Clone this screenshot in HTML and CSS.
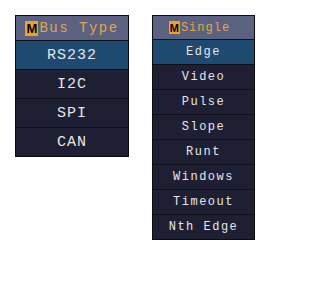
FILE: index.html
```html
<!DOCTYPE html>
<html>
<head>
<meta charset="utf-8">
<link rel="stylesheet" href="styles.css">
</head>
<body>
<div class="stage">
  <div class="menu menu-bus">
    <div class="menu-head"><span class="badge">M</span><span class="title">Bus Type</span></div>
    <div class="item selected">RS232</div>
    <div class="item">I2C</div>
    <div class="item">SPI</div>
    <div class="item">CAN</div>
  </div>
  <div class="menu menu-single">
    <div class="menu-head"><span class="badge">M</span><span class="title">Single</span></div>
    <div class="item selected">Edge</div>
    <div class="item">Video</div>
    <div class="item">Pulse</div>
    <div class="item">Slope</div>
    <div class="item">Runt</div>
    <div class="item">Windows</div>
    <div class="item">Timeout</div>
    <div class="item">Nth Edge</div>
  </div>
</div>
</body>
</html>
```
FILE: styles.css
```css
html, body {
  margin: 0;
  padding: 0;
  background: #ffffff;
}
.stage {
  display: flex;
  align-items: flex-start;
  gap: 23px;
  padding: 15px 0 0 15px;
  font-family: "Liberation Mono", "Courier New", monospace;
}
.menu {
  display: flex;
  flex-direction: column;
  background: #10101a;
  border: 1px solid #0c0c14;
  gap: 1px;
}
.menu-head {
  display: flex;
  align-items: center;
  justify-content: center;
  background: #5b6180;
  color: #e3a54a;
}
.badge {
  display: inline-flex;
  align-items: center;
  justify-content: center;
  background: #f0a21e;
  color: #000;
  font-family: "Liberation Sans", Arial, sans-serif;
  font-weight: bold;
}
.item {
  display: flex;
  align-items: center;
  justify-content: center;
  background: #1f1f33;
  color: #e6e6e6;
}
.item.selected {
  background: #1f4a70;
}
.menu-bus {
  width: 112px;
}
.menu-bus .menu-head {
  height: 24px;
  font-size: 14px;
  letter-spacing: 1.5px;
}
.menu-bus .badge {
  width: 13px;
  height: 15px;
  font-size: 13px;
  letter-spacing: 0;
  margin-right: 1px;
}
.menu-bus .item {
  height: 28px;
  font-size: 15px;
  letter-spacing: 1px;
}
.menu-single {
  width: 101px;
}
.menu-single .menu-head {
  height: 23px;
  font-size: 12px;
  letter-spacing: 1px;
  padding-right: 8px;
}
.menu-single .badge {
  width: 11px;
  height: 13px;
  font-size: 11px;
  letter-spacing: 0;
  margin-right: 1px;
}
.menu-single .item {
  height: 24px;
  font-size: 12px;
  letter-spacing: 1.5px;
}
```
